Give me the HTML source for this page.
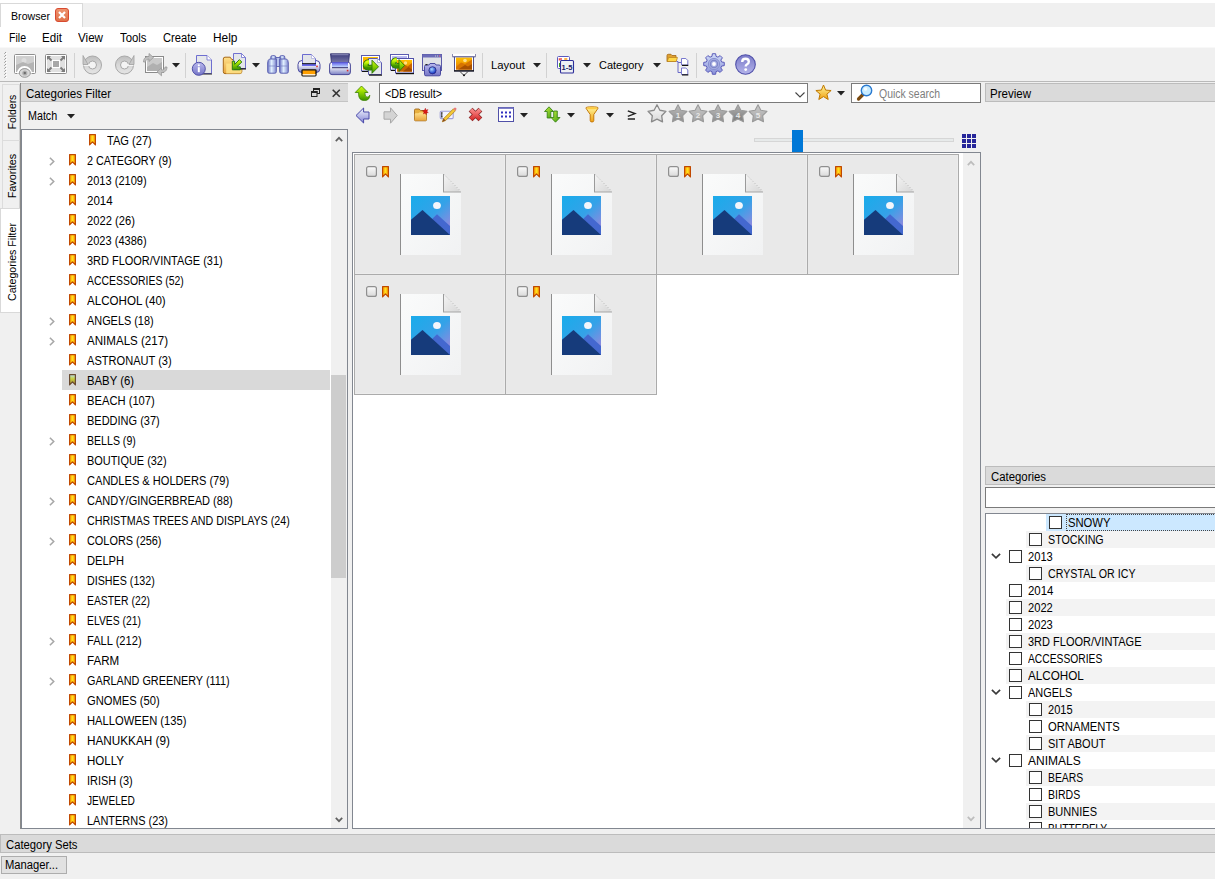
<!DOCTYPE html><html><head><meta charset="utf-8"><style>
html,body{margin:0;padding:0}
body{width:1215px;height:879px;position:relative;overflow:hidden;background:#f0f0f0;font-family:"Liberation Sans",sans-serif;color:#000}
div{position:absolute;box-sizing:border-box}
.t{white-space:nowrap;line-height:1;transform-origin:0 0}
svg{position:absolute;overflow:visible}
</style></head><body>
<div style="left:0px;top:0px;width:1215px;height:3px;background:#fff"></div>
<div style="left:0px;top:3px;width:83px;height:24px;background:#fff;border:1px solid #d9d9d9;border-bottom:none"></div>
<div class="t" style="left:11px;top:11px;font-size:11.5px;transform:scaleX(0.9244);">Browser</div>
<svg style="left:55px;top:8px" width="14" height="14" viewBox="0 0 14 14"><defs><linearGradient id="cg" x1="0" y1="0" x2="0" y2="1"><stop offset="0" stop-color="#ee9470"/><stop offset="1" stop-color="#e07048"/></linearGradient></defs><rect x="0.5" y="0.5" width="13" height="13" rx="2.5" fill="url(#cg)" stroke="#d84a30"/><path d="M4 4L10 10M10 4L4 10" stroke="#fff" stroke-width="2.2"/></svg>
<div style="left:0px;top:27px;width:1215px;height:21px;background:#fff"></div>
<div style="left:0px;top:47px;width:1215px;height:1px;background:#f8f8f8"></div>
<div class="t" style="left:9px;top:32px;font-size:12px;transform:scaleX(0.8788);">File</div>
<div class="t" style="left:42px;top:32px;font-size:12px;transform:scaleX(0.9668);">Edit</div>
<div class="t" style="left:78px;top:32px;font-size:12px;transform:scaleX(0.9691);">View</div>
<div class="t" style="left:119.5px;top:32px;font-size:12px;transform:scaleX(0.9459);">Tools</div>
<div class="t" style="left:162.5px;top:32px;font-size:12px;transform:scaleX(0.9297);">Create</div>
<div class="t" style="left:212.5px;top:32px;font-size:12px;transform:scaleX(0.9924);">Help</div>
<div style="left:0px;top:81px;width:1215px;height:1px;background:#b9b9b9"></div>
<div style="left:5px;top:52px;width:1px;height:1px;background:#9a9a9a"></div>
<div style="left:4px;top:53px;width:1px;height:1px;background:#b4b4b4"></div>
<div style="left:6px;top:53px;width:1px;height:1px;background:#fff"></div>
<div style="left:5px;top:55px;width:1px;height:1px;background:#9a9a9a"></div>
<div style="left:4px;top:56px;width:1px;height:1px;background:#b4b4b4"></div>
<div style="left:6px;top:56px;width:1px;height:1px;background:#fff"></div>
<div style="left:5px;top:58px;width:1px;height:1px;background:#9a9a9a"></div>
<div style="left:4px;top:59px;width:1px;height:1px;background:#b4b4b4"></div>
<div style="left:6px;top:59px;width:1px;height:1px;background:#fff"></div>
<div style="left:5px;top:61px;width:1px;height:1px;background:#9a9a9a"></div>
<div style="left:4px;top:62px;width:1px;height:1px;background:#b4b4b4"></div>
<div style="left:6px;top:62px;width:1px;height:1px;background:#fff"></div>
<div style="left:5px;top:64px;width:1px;height:1px;background:#9a9a9a"></div>
<div style="left:4px;top:65px;width:1px;height:1px;background:#b4b4b4"></div>
<div style="left:6px;top:65px;width:1px;height:1px;background:#fff"></div>
<div style="left:5px;top:67px;width:1px;height:1px;background:#9a9a9a"></div>
<div style="left:4px;top:68px;width:1px;height:1px;background:#b4b4b4"></div>
<div style="left:6px;top:68px;width:1px;height:1px;background:#fff"></div>
<div style="left:5px;top:70px;width:1px;height:1px;background:#9a9a9a"></div>
<div style="left:4px;top:71px;width:1px;height:1px;background:#b4b4b4"></div>
<div style="left:6px;top:71px;width:1px;height:1px;background:#fff"></div>
<div style="left:5px;top:73px;width:1px;height:1px;background:#9a9a9a"></div>
<div style="left:4px;top:74px;width:1px;height:1px;background:#b4b4b4"></div>
<div style="left:6px;top:74px;width:1px;height:1px;background:#fff"></div>
<div style="left:5px;top:76px;width:1px;height:1px;background:#9a9a9a"></div>
<div style="left:4px;top:77px;width:1px;height:1px;background:#b4b4b4"></div>
<div style="left:6px;top:77px;width:1px;height:1px;background:#fff"></div>
<div style="left:74px;top:53px;width:1px;height:25px;background:#d2d2d2"></div>
<div style="left:185px;top:53px;width:1px;height:25px;background:#d2d2d2"></div>
<div style="left:482px;top:53px;width:1px;height:25px;background:#d2d2d2"></div>
<div style="left:546px;top:53px;width:1px;height:25px;background:#d2d2d2"></div>
<div style="left:696px;top:53px;width:1px;height:25px;background:#d2d2d2"></div>
<div class="t" style="left:491px;top:60px;font-size:11.5px;transform:scaleX(0.9846);">Layout</div>
<div class="t" style="left:599px;top:60px;font-size:11.5px;transform:scaleX(0.9535);">Category</div>
<svg style="left:172px;top:63px" width="8" height="5" viewBox="0 0 8 5"><path d="M0 0H8L4 4.5Z" fill="#222"/></svg>
<svg style="left:252px;top:63px" width="8" height="5" viewBox="0 0 8 5"><path d="M0 0H8L4 4.5Z" fill="#222"/></svg>
<svg style="left:533px;top:63px" width="8" height="5" viewBox="0 0 8 5"><path d="M0 0H8L4 4.5Z" fill="#222"/></svg>
<svg style="left:583px;top:63px" width="8" height="5" viewBox="0 0 8 5"><path d="M0 0H8L4 4.5Z" fill="#222"/></svg>
<svg style="left:653px;top:63px" width="8" height="5" viewBox="0 0 8 5"><path d="M0 0H8L4 4.5Z" fill="#222"/></svg>
<svg style="left:0;top:0" width="0" height="0"><defs>
<linearGradient id="gray1" x1="0" y1="0" x2="0" y2="1"><stop offset="0" stop-color="#d4d4d4"/><stop offset="1" stop-color="#a8a8a8"/></linearGradient>
<linearGradient id="ring" x1="0" y1="0" x2="0" y2="1"><stop offset="0" stop-color="#bdbdbd"/><stop offset="0.5" stop-color="#d8d8d8"/><stop offset="1" stop-color="#e4e4e4"/></linearGradient>
<linearGradient id="purp" x1="0" y1="0" x2="0" y2="1"><stop offset="0" stop-color="#b9b9ee"/><stop offset="1" stop-color="#7474c6"/></linearGradient>
<linearGradient id="purp2" x1="0" y1="0" x2="0" y2="1"><stop offset="0" stop-color="#7a7ac8"/><stop offset="1" stop-color="#b4b4ea"/></linearGradient>
<linearGradient id="fold" x1="0" y1="0" x2="0" y2="1"><stop offset="0" stop-color="#ffe08a"/><stop offset="1" stop-color="#e8a640"/></linearGradient>
<linearGradient id="grn" x1="0" y1="0" x2="1" y2="1"><stop offset="0" stop-color="#c8f040"/><stop offset="1" stop-color="#3c9c10"/></linearGradient><linearGradient id="grn2" x1="0" y1="0" x2="0" y2="1"><stop offset="0" stop-color="#d8ff10"/><stop offset="0.5" stop-color="#88d000"/><stop offset="1" stop-color="#3a9000"/></linearGradient><linearGradient id="bk" x1="0" y1="0" x2="0" y2="1"><stop offset="0" stop-color="#f4f8ff"/><stop offset="1" stop-color="#8484d4"/></linearGradient>
<linearGradient id="binoc" x1="0" y1="0" x2="1" y2="0"><stop offset="0" stop-color="#8088d8"/><stop offset="0.5" stop-color="#d8e4f8"/><stop offset="1" stop-color="#8088d8"/></linearGradient>
<linearGradient id="prb" x1="0" y1="0" x2="0" y2="1"><stop offset="0" stop-color="#ffffff"/><stop offset="0.4" stop-color="#f0f0f6"/><stop offset="1" stop-color="#7a80c4"/></linearGradient>
<linearGradient id="lid" x1="0" y1="0" x2="0" y2="1"><stop offset="0" stop-color="#3a3a7c"/><stop offset="1" stop-color="#7a7aa8"/></linearGradient>
<linearGradient id="glass" x1="0" y1="0" x2="0" y2="1"><stop offset="0" stop-color="#5a5ae8"/><stop offset="1" stop-color="#c8e0ff"/></linearGradient>
<linearGradient id="orng" x1="0" y1="0" x2="0" y2="1"><stop offset="0" stop-color="#ffc000"/><stop offset="1" stop-color="#e07800"/></linearGradient>
<linearGradient id="gear" x1="0" y1="0" x2="0" y2="1"><stop offset="0" stop-color="#d0dcf8"/><stop offset="1" stop-color="#8890d8"/></linearGradient>
<linearGradient id="gold" x1="0" y1="0" x2="0" y2="1"><stop offset="0" stop-color="#fff8a0"/><stop offset="1" stop-color="#f0a010"/></linearGradient>
<linearGradient id="starg" x1="0" y1="0" x2="0" y2="1"><stop offset="0" stop-color="#bcbcbc"/><stop offset="1" stop-color="#8e8e8e"/></linearGradient><linearGradient id="starg2" x1="0" y1="0" x2="0" y2="1"><stop offset="0" stop-color="#cacaca"/><stop offset="1" stop-color="#a4a4a4"/></linearGradient><linearGradient id="starg3" x1="0" y1="0" x2="0" y2="1"><stop offset="0" stop-color="#b0b0b0"/><stop offset="1" stop-color="#7c7c7c"/></linearGradient><linearGradient id="star0" x1="0" y1="0" x2="0" y2="1"><stop offset="0" stop-color="#fafafa"/><stop offset="1" stop-color="#d8d8d8"/></linearGradient>
<radialGradient id="lens" cx="0.4" cy="0.35" r="0.6"><stop offset="0" stop-color="#a8d8ff"/><stop offset="1" stop-color="#1838c8"/></radialGradient>
</defs></svg>
<svg style="left:14px;top:54px" width="23" height="24" viewBox="0 0 23 24"><rect x="0.5" y="0.5" width="21" height="19" rx="1" fill="#fff" stroke="#8e8e8e"/><rect x="2" y="2" width="18" height="16" fill="#cfcfcf"/><circle cx="10" cy="6.5" r="2.5" fill="#dedede"/><path d="M2 11L9 8L14 10L20 8V18H2Z" fill="#b4b4b4"/><path d="M4 19.5A6.5 6.5 0 0 1 17 19.5" fill="none" stroke="#fff" stroke-width="2"/><ellipse cx="10.8" cy="19" rx="5.5" ry="4.3" fill="#d8d8d8" stroke="#9a9a9a"/><circle cx="10.8" cy="19" r="2.6" fill="#b0b0b0"/><circle cx="10.8" cy="19" r="1.2" fill="#6e6e6e"/></svg>
<svg style="left:45px;top:54px" width="22" height="20" viewBox="0 0 22 20"><rect x="0.5" y="0.5" width="21" height="19" rx="1" fill="#fff" stroke="#8a8a8a"/><rect x="2" y="2" width="18" height="16" fill="#e0e0e0"/><rect x="7" y="6" width="8" height="8" fill="#fff"/><rect x="8" y="7" width="6" height="6" fill="#a8a8a8"/><path d="M2.5 2.5L6.5 6.5M19.5 2.5L15.5 6.5M2.5 17.5L6.5 13.5M19.5 17.5L15.5 13.5" stroke="#7c7c7c" stroke-width="2"/><path d="M2 2H6L2 6ZM20 2H16L20 6ZM2 18H6L2 14ZM20 18H16L20 14Z" fill="#7c7c7c"/></svg>
<svg style="left:82px;top:55px" width="21" height="20" viewBox="0 0 21 20"><circle cx="10.5" cy="10" r="9" fill="url(#ring)" stroke="#a8a8a8"/><circle cx="10.5" cy="10" r="4" fill="#f4f4f4" stroke="#a8a8a8"/><path d="M1.5 10H9" stroke="#f4f4f4" stroke-width="2"/><path d="M1 0.5V9.5H6Z" fill="#c8c8c8" stroke="#a0a0a0" stroke-width="0.8"/></svg>
<svg style="left:114px;top:55px" width="21" height="20" viewBox="0 0 21 20"><circle cx="10.5" cy="10" r="9" fill="url(#ring)" stroke="#a8a8a8"/><circle cx="10.5" cy="10" r="4" fill="#f4f4f4" stroke="#a8a8a8"/><path d="M12 10H19.5" stroke="#f4f4f4" stroke-width="2"/><path d="M20 0.5V9.5H15Z" fill="#c8c8c8" stroke="#a0a0a0" stroke-width="0.8"/></svg>
<svg style="left:143px;top:53px" width="25" height="24" viewBox="0 0 25 24"><rect x="2.5" y="3.5" width="18" height="16" fill="#fff" stroke="#8a8a8a"/><rect x="4" y="5" width="15" height="13" fill="#cacaca"/><path d="M4 14L10 10L14 12L19 9V18H4Z" fill="#b0b0b0"/><path d="M0.5 9C0.5 5 3 3.5 6 3.5V0.5L10.5 4.5L6 8.5V6C4 6 2.5 7 2.5 9Z" fill="#c0c0c0" stroke="#9a9a9a" stroke-width="0.8"/><path d="M24 14C24 18 21.5 19.5 18.5 19.5V22.8L14 18.8L18.5 14.8V17C20.5 17 22 16 22 14Z" fill="#c0c0c0" stroke="#9a9a9a" stroke-width="0.8"/></svg>
<svg style="left:191px;top:54px" width="22" height="23" viewBox="0 0 22 23"><path d="M5.5 1.5H16L20.5 6V19.5H5.5Z" fill="#e6e8ea" stroke="#6e6ed0"/><path d="M16 1.5V6H20.5" fill="#fff" stroke="#6e6ed0" stroke-width="0.8"/><rect x="7" y="19.5" width="14" height="1" fill="#222"/><circle cx="7.8" cy="14.8" r="6.5" fill="url(#purp)" stroke="#5050a8"/><rect x="6.8" y="13.2" width="2" height="5" fill="#fff"/><circle cx="7.8" cy="11.3" r="1.1" fill="#fff"/></svg>
<svg style="left:222px;top:52px" width="25" height="23" viewBox="0 0 25 23"><path d="M1.3 7Q1.3 5.2 3 5.2H8.2L9.8 7.5H18.2Q19.8 7.5 19.8 9V19.8Q19.8 21.6 18 21.6H3Q1.3 21.6 1.3 19.8Z" fill="url(#fold)" stroke="#a86a18" stroke-width="1"/><path d="M4.2 11.5H19.6V20.5Q19.6 21.4 18.6 21.4H4.2Z" fill="#ffe48a" opacity="0.85"/><path d="M11.5 1.5H19.5L23.5 5.5V16.5H11.5Z" fill="#e4e6ea" stroke="#7070d0"/><path d="M19.5 1.5V5.5H23.5Z" fill="#fff" stroke="#7070d0" stroke-width="0.8"/><rect x="12" y="16.3" width="12" height="1.2" fill="#111"/><path d="M10.3 17.8H18.3V14.8H15L19.8 10L17.4 7.6L12.6 12.4V9.2H10.3Z" fill="url(#grn2)" stroke="#1c7010" stroke-width="0.9" stroke-linejoin="round"/></svg>
<svg style="left:267px;top:55px" width="22" height="19" viewBox="0 0 22 19"><defs><linearGradient id="barl" x1="0" y1="0" x2="1" y2="0"><stop offset="0" stop-color="#7078c8"/><stop offset="0.45" stop-color="#e0f0ff"/><stop offset="1" stop-color="#8088d0"/></linearGradient></defs><rect x="3.8" y="0.6" width="5" height="4.5" rx="1.5" fill="url(#barl)" stroke="#5a60b0" stroke-width="0.9"/><rect x="12.8" y="0.6" width="5" height="4.5" rx="1.5" fill="url(#barl)" stroke="#5a60b0" stroke-width="0.9"/><rect x="9" y="2.5" width="4" height="9" fill="#b8c4ee" stroke="#5a60b0" stroke-width="0.9"/><path d="M2.5 4H9.3V16.8Q9.3 18.2 7.8 18.2H2.2Q0.7 18.2 0.7 16.8V8Q0.7 5 2.5 4Z" fill="url(#barl)" stroke="#5a60b0" stroke-width="1"/><path d="M19.5 4H12.7V16.8Q12.7 18.2 14.2 18.2H19.8Q21.3 18.2 21.3 16.8V8Q21.3 5 19.5 4Z" fill="url(#barl)" stroke="#5a60b0" stroke-width="1"/><rect x="1.5" y="10.5" width="7" height="1" fill="#7078c0" opacity="0.6"/><rect x="13.5" y="10.5" width="7" height="1" fill="#7078c0" opacity="0.6"/></svg>
<svg style="left:297px;top:53px" width="24" height="24" viewBox="0 0 24 24"><path d="M1 11.5Q1 7.5 5 7.5H19Q23 7.5 23 11.5V15.5Q23 19.5 19 19.5H5Q1 19.5 1 15.5Z" fill="url(#prb)" stroke="#4a4aa0" stroke-width="1"/><path d="M5.5 1.5H14.5L18.5 5.5V11H5.5Z" fill="#e2e4e8" stroke="#6a6ad0" stroke-width="1"/><path d="M14.5 1.5V5.5H18.5Z" fill="#fff" stroke="#9a9ad8" stroke-width="0.6"/><rect x="5" y="10.2" width="14" height="1.2" fill="#111"/><rect x="5" y="11.4" width="14" height="1.4" fill="#4848e8"/><rect x="19.2" y="12.6" width="1.6" height="1.6" fill="#d83030"/><rect x="5" y="16.8" width="14" height="6" rx="0.8" fill="#ffa000" stroke="#111" stroke-width="1.3"/><rect x="5.6" y="21.2" width="12.8" height="1.2" fill="#fff"/></svg>
<svg style="left:329px;top:53px" width="22" height="23" viewBox="0 0 22 23"><path d="M1.5 0.8H20.5L19.5 10H2.5Z" fill="url(#lid)" stroke="#2c2c6c" stroke-width="0.8"/><rect x="2.5" y="1.2" width="17" height="1" fill="#8a8ab8"/><path d="M0.6 12Q0.6 9.5 2.5 9.5H19.5Q21.4 9.5 21.4 12V19Q21.4 21.6 19 21.6H3Q0.6 21.6 0.6 19Z" fill="url(#prb)" stroke="#4a4a98" stroke-width="1"/><rect x="3" y="9.3" width="16" height="5" fill="url(#glass)"/><rect x="3" y="14.2" width="16" height="1" fill="#2a2a6a"/><rect x="17.8" y="16.8" width="1.6" height="1.6" fill="#d83030"/></svg>
<svg style="left:360px;top:54px" width="23" height="22" viewBox="0 0 23 22"><rect x="1.5" y="1.5" width="18" height="15.5" fill="#fff" stroke="#5a5ab0"/><rect x="3" y="3" width="15" height="12.5" fill="url(#orng)"/><rect x="2" y="17" width="7" height="1" fill="#111"/><path d="M8.5 4.5H17.5L21.5 8.5V20.5H8.5Z" fill="#e6e8ea" stroke="#5a5ab0"/><path d="M17.5 4.5V8.5H21.5Z" fill="#fff" stroke="#8a8ad0" stroke-width="0.6"/><rect x="9" y="20.5" width="13" height="1.2" fill="#111"/><path d="M9 8Q5.3 8.3 5.6 11.6Q6 14.8 12.5 13.3" fill="none" stroke="#2e7a08" stroke-width="5.6"/><path d="M9 8Q5.3 8.3 5.6 11.6Q6 14.8 12.5 13.3" fill="none" stroke="url(#grn2)" stroke-width="3.8"/><path d="M12 6.2L18.5 12.8L12 19.3Z" fill="url(#grn2)" stroke="#2e7a08" stroke-width="0.9" stroke-linejoin="round"/></svg>
<svg style="left:389px;top:53px" width="26" height="22" viewBox="0 0 26 22"><defs><linearGradient id="lpurp" x1="0" y1="0" x2="0" y2="1"><stop offset="0" stop-color="#c0c0f4"/><stop offset="1" stop-color="#7474d4"/></linearGradient></defs><rect x="1.5" y="1.5" width="18" height="15.5" fill="#fff" stroke="#5a5ab0"/><rect x="3" y="3" width="15" height="12.5" fill="url(#lpurp)"/><rect x="2" y="17" width="5" height="1" fill="#111"/><rect x="6.5" y="5.5" width="18" height="14.5" fill="#fff" stroke="#5050a8"/><rect x="8" y="7" width="15" height="11.5" fill="url(#orng)"/><rect x="7" y="20" width="18" height="1.2" fill="#111"/><path d="M8 18.5L15 11L18.5 13.5L23 10V18.5Z" fill="#c86400"/><path d="M14 18.5L19.5 14L23 16.5V18.5Z" fill="#a04800"/><circle cx="16.5" cy="10" r="1.7" fill="#ffe080"/><path d="M7.8 7Q4 7.3 4.3 10.6Q4.6 13.8 10.5 12.6" fill="none" stroke="#2e7a08" stroke-width="5.6"/><path d="M7.8 7Q4 7.3 4.3 10.6Q4.6 13.8 10.5 12.6" fill="none" stroke="url(#grn2)" stroke-width="3.8"/><path d="M10 6.5L15.5 12.5L10 18.5Z" fill="url(#grn2)" stroke="#2e7a08" stroke-width="0.9" stroke-linejoin="round"/></svg>
<svg style="left:421px;top:53px" width="22" height="24" viewBox="0 0 22 24"><rect x="1.5" y="1.5" width="19" height="16" fill="#e0e2e6" stroke="#5a5aa8"/><rect x="1.5" y="1.5" width="19" height="3" fill="#6c6cb8"/><rect x="14" y="2.5" width="1" height="1" fill="#ccc"/><rect x="16" y="2.5" width="1" height="1" fill="#ccc"/><rect x="18" y="2.5" width="1.2" height="1" fill="#f06080"/><path d="M3.5 13.5Q3.5 12 5 12H8L9 10.5H14L15 12H18Q19.5 12 19.5 13.5V21.5Q19.5 22.8 18 22.8H5Q3.5 22.8 3.5 21.5Z" fill="url(#purp)" stroke="#4a4aa0"/><rect x="4.5" y="11" width="2" height="1.2" fill="#222"/><circle cx="11.5" cy="17.3" r="3.6" fill="url(#lens)" stroke="#2a2a80" stroke-width="0.8"/></svg>
<svg style="left:452px;top:53px" width="24" height="24" viewBox="0 0 24 24"><rect x="2.5" y="3.5" width="19" height="14.5" fill="#fff" stroke="#50508a"/><rect x="4" y="4.5" width="16" height="12" fill="url(#orng)"/><path d="M4 14L9 9.5L13 11L20 6.5V16.5H4Z" fill="#d87400"/><path d="M6 16.5L13 12L16 13.5L20 11V16.5Z" fill="#a85000"/><circle cx="13" cy="7.5" r="1.8" fill="#ffe088"/><rect x="2" y="17.2" width="20" height="1.3" fill="#111"/><rect x="0.5" y="0.8" width="23" height="3" fill="#fff"/><rect x="0.5" y="3.3" width="23" height="1" fill="#50508a"/><rect x="0" y="1" width="1" height="3" fill="#8a8ab0"/><rect x="23" y="1" width="1" height="3" fill="#8a8ab0"/><path d="M8 18.5L12 22.5L16 18.5" fill="none" stroke="#333" stroke-width="0.9"/><circle cx="12" cy="22.3" r="1" fill="#111"/></svg>
<svg style="left:556px;top:56px" width="19" height="18" viewBox="0 0 19 18"><rect x="1.5" y="0.5" width="12" height="12" rx="1" fill="#fff" stroke="#5a5ac0"/><path d="M3.5 4.5V3H6" stroke="#e85050" stroke-width="1.6" fill="none"/><rect x="8" y="2.2" width="3.5" height="1.6" rx="0.8" fill="#ff9a10"/><rect x="3" y="7" width="1.4" height="4" fill="#40a020"/><rect x="4.5" y="4.5" width="13" height="12.5" rx="1" fill="#eef0f4" stroke="#2e2e9a" stroke-width="1.1"/><text x="11" y="14.2" font-family="Liberation Sans" font-weight="bold" font-size="7.5" text-anchor="middle" fill="#1a1a60">1-5</text></svg>
<svg style="left:666px;top:53px" width="24" height="23" viewBox="0 0 24 23"><path d="M1 8.5V2.5Q1 1.3 2.2 1.3H5L6 2.5H10V8.5Z" fill="#e0a030" stroke="#a87020" stroke-width="0.9"/><path d="M1.2 8.5L2.6 4.5H11.5L10.2 8.5Z" fill="#ffd84a" stroke="#b88020" stroke-width="0.7"/><path d="M10.5 8.5H12V19.5H15M12 9.5H15" fill="none" stroke="#6a6ac8" stroke-width="1"/><path d="M15.5 5.5H19.8L21.8 7.5V12H15.5Z" fill="#fff" stroke="#6a6ac8" stroke-width="0.9"/><rect x="16" y="11.8" width="6.3" height="1.2" fill="#111"/><path d="M15.5 15H19.8L21.8 17V21.5H15.5Z" fill="#fff" stroke="#6a6ac8" stroke-width="0.9"/><rect x="16" y="21.3" width="6.3" height="1.2" fill="#111"/></svg>
<svg style="left:703px;top:53px" width="22" height="22" viewBox="0 0 22 22"><polygon points="18.63,8.96 21.27,9.37 21.27,12.63 18.63,13.04 17.84,14.95 19.41,17.11 17.11,19.41 14.95,17.84 13.04,18.63 12.63,21.27 9.37,21.27 8.96,18.63 7.05,17.84 4.89,19.41 2.59,17.11 4.16,14.95 3.37,13.04 0.73,12.63 0.73,9.37 3.37,8.96 4.16,7.05 2.59,4.89 4.89,2.59 7.05,4.16 8.96,3.37 9.37,0.73 12.63,0.73 13.04,3.37 14.95,4.16 17.11,2.59 19.41,4.89 17.84,7.05" fill="url(#gear)" stroke="#5a5ab8" stroke-width="1" stroke-linejoin="round"/><circle cx="11" cy="11" r="5.6" fill="#a8b0e4" stroke="#8890d0" stroke-width="1"/><circle cx="11" cy="11" r="3.6" fill="none" stroke="#8088c8" stroke-width="1.3"/><circle cx="11" cy="11" r="1.9" fill="#fff"/></svg>
<svg style="left:735px;top:54px" width="21" height="21" viewBox="0 0 21 21"><circle cx="10.5" cy="10.5" r="9.8" fill="url(#purp2)" stroke="#5252aa" stroke-width="1.1"/><path d="M7.2 8Q7.2 4.8 10.5 4.8Q13.8 4.8 13.8 7.8Q13.8 9.5 11.8 10.5Q10.7 11.1 10.7 12.6" fill="none" stroke="#fff" stroke-width="2.4"/><circle cx="10.7" cy="15.6" r="1.4" fill="#fff"/></svg>
<div style="left:2px;top:84px;width:18px;height:56px;background:#f0f0f0;border:1px solid #dcdcdc;border-right:1px solid #d0d0d0;border-bottom:none"></div>
<div style="left:2px;top:140px;width:18px;height:68px;background:#f0f0f0;border:1px solid #dcdcdc;border-right:1px solid #d0d0d0;border-bottom:none"></div>
<div style="left:0px;top:208px;width:21px;height:105px;background:#fff;border:1px solid #d9d9d9;border-right:none"></div>
<div style="left:20px;top:83px;width:1px;height:746px;background:#8a8a8a"></div>
<div class="t" style="left:11.5px;top:112px;font-size:11px;transform:translate(-50%,-50%) rotate(-90deg) scaleX(0.9431);transform-origin:50% 50%;">Folders</div>
<div class="t" style="left:11.5px;top:176px;font-size:11px;transform:translate(-50%,-50%) rotate(-90deg) scaleX(0.9856);transform-origin:50% 50%;">Favorites</div>
<div class="t" style="left:11.5px;top:262px;font-size:11px;transform:translate(-50%,-50%) rotate(-90deg) scaleX(0.9665);transform-origin:50% 50%;">Categories Filter</div>
<div style="left:21px;top:83px;width:327px;height:19px;background:#dadada;border-top:1px solid #c4c4c4;border-bottom:1px solid #c4c4c4"></div>
<div class="t" style="left:26px;top:88px;font-size:12px;transform:scaleX(0.9656);">Categories Filter</div>
<div class="t" style="left:28px;top:110px;font-size:12px;transform:scaleX(0.8933);">Match</div>
<svg style="left:67px;top:114px" width="8" height="5" viewBox="0 0 8 5"><path d="M0 0H8L4 4.5Z" fill="#222"/></svg>
<svg style="left:311px;top:88px" width="9" height="9" viewBox="0 0 9 9"><rect x="2.5" y="0.5" width="6" height="5" fill="none" stroke="#222"/><rect x="2" y="0" width="7" height="2" fill="#222"/><rect x="0.5" y="3.5" width="5.5" height="5" fill="#dadada" stroke="#222"/><rect x="0" y="3" width="6.5" height="2" fill="#222"/></svg>
<svg style="left:332px;top:89px" width="9" height="9" viewBox="0 0 9 9"><path d="M0.7 0.7L7.8 7.8M7.8 0.7L0.7 7.8" stroke="#333" stroke-width="1.6"/></svg>
<div style="left:21px;top:129px;width:327px;height:700px;background:#fff;border:1px solid #828790"></div>
<div style="left:331px;top:130px;width:16px;height:698px;background:#f0f0f0"></div>
<div style="left:331px;top:375px;width:15px;height:203px;background:#cdcdcd"></div>
<svg style="left:335px;top:136px" width="8" height="6" viewBox="0 0 8 6"><path d="M0.8 5.2L4 1.8L7.2 5.2" fill="none" stroke="#606060" stroke-width="1.7"/></svg>
<svg style="left:335px;top:817px" width="8" height="6" viewBox="0 0 8 6"><path d="M0.8 0.8L4 4.2L7.2 0.8" fill="none" stroke="#606060" stroke-width="1.7"/></svg>
<svg style="left:0;top:0" width="0" height="0"><defs><linearGradient id="bg1" x1="0" y1="0" x2="1" y2="0"><stop offset="0" stop-color="#ff9a00"/><stop offset="0.5" stop-color="#ffe020"/><stop offset="1" stop-color="#ff9a00"/></linearGradient><linearGradient id="bg2" x1="0" y1="0" x2="0" y2="1"><stop offset="0" stop-color="#b8e0f0"/><stop offset="0.4" stop-color="#c8d040"/><stop offset="1" stop-color="#a08030"/></linearGradient></defs></svg>
<div style="left:22px;top:130px;width:309px;height:698px;overflow:hidden">
<svg style="left:67px;top:4px" width="7" height="12" viewBox="0 0 7 12"><path d="M0.6 0.6H6.4V10.9L3.5 7.9L0.6 10.9Z" fill="url(#bg1)" stroke="#c04800" stroke-width="1.2" stroke-linejoin="round"/></svg>
<div class="t" style="left:85px;top:5px;font-size:12px;transform:scaleX(0.9246);">TAG (27)</div>
<svg style="left:27px;top:26.5px" width="6" height="9" viewBox="0 0 6 9"><path d="M0.9 0.8L4.7 4.5L0.9 8.2" fill="none" stroke="#a8a8a8" stroke-width="1.6"/></svg>
<svg style="left:47px;top:24px" width="7" height="12" viewBox="0 0 7 12"><path d="M0.6 0.6H6.4V10.9L3.5 7.9L0.6 10.9Z" fill="url(#bg1)" stroke="#c04800" stroke-width="1.2" stroke-linejoin="round"/></svg>
<div class="t" style="left:65px;top:25px;font-size:12px;transform:scaleX(0.9008);">2 CATEGORY (9)</div>
<svg style="left:27px;top:46.5px" width="6" height="9" viewBox="0 0 6 9"><path d="M0.9 0.8L4.7 4.5L0.9 8.2" fill="none" stroke="#a8a8a8" stroke-width="1.6"/></svg>
<svg style="left:47px;top:44px" width="7" height="12" viewBox="0 0 7 12"><path d="M0.6 0.6H6.4V10.9L3.5 7.9L0.6 10.9Z" fill="url(#bg1)" stroke="#c04800" stroke-width="1.2" stroke-linejoin="round"/></svg>
<div class="t" style="left:65px;top:45px;font-size:12px;transform:scaleX(0.9225);">2013 (2109)</div>
<svg style="left:47px;top:64px" width="7" height="12" viewBox="0 0 7 12"><path d="M0.6 0.6H6.4V10.9L3.5 7.9L0.6 10.9Z" fill="url(#bg1)" stroke="#c04800" stroke-width="1.2" stroke-linejoin="round"/></svg>
<div class="t" style="left:65px;top:65px;font-size:12px;transform:scaleX(0.9587);">2014</div>
<svg style="left:47px;top:84px" width="7" height="12" viewBox="0 0 7 12"><path d="M0.6 0.6H6.4V10.9L3.5 7.9L0.6 10.9Z" fill="url(#bg1)" stroke="#c04800" stroke-width="1.2" stroke-linejoin="round"/></svg>
<div class="t" style="left:65px;top:85px;font-size:12px;transform:scaleX(0.9324);">2022 (26)</div>
<svg style="left:47px;top:104px" width="7" height="12" viewBox="0 0 7 12"><path d="M0.6 0.6H6.4V10.9L3.5 7.9L0.6 10.9Z" fill="url(#bg1)" stroke="#c04800" stroke-width="1.2" stroke-linejoin="round"/></svg>
<div class="t" style="left:65px;top:105px;font-size:12px;transform:scaleX(0.9225);">2023 (4386)</div>
<svg style="left:47px;top:124px" width="7" height="12" viewBox="0 0 7 12"><path d="M0.6 0.6H6.4V10.9L3.5 7.9L0.6 10.9Z" fill="url(#bg1)" stroke="#c04800" stroke-width="1.2" stroke-linejoin="round"/></svg>
<div class="t" style="left:65px;top:125px;font-size:12px;transform:scaleX(0.9139);">3RD FLOOR/VINTAGE (31)</div>
<svg style="left:47px;top:144px" width="7" height="12" viewBox="0 0 7 12"><path d="M0.6 0.6H6.4V10.9L3.5 7.9L0.6 10.9Z" fill="url(#bg1)" stroke="#c04800" stroke-width="1.2" stroke-linejoin="round"/></svg>
<div class="t" style="left:65px;top:145px;font-size:12px;transform:scaleX(0.8691);">ACCESSORIES (52)</div>
<svg style="left:47px;top:164px" width="7" height="12" viewBox="0 0 7 12"><path d="M0.6 0.6H6.4V10.9L3.5 7.9L0.6 10.9Z" fill="url(#bg1)" stroke="#c04800" stroke-width="1.2" stroke-linejoin="round"/></svg>
<div class="t" style="left:65px;top:165px;font-size:12px;transform:scaleX(0.9645);">ALCOHOL (40)</div>
<svg style="left:27px;top:186.5px" width="6" height="9" viewBox="0 0 6 9"><path d="M0.9 0.8L4.7 4.5L0.9 8.2" fill="none" stroke="#a8a8a8" stroke-width="1.6"/></svg>
<svg style="left:47px;top:184px" width="7" height="12" viewBox="0 0 7 12"><path d="M0.6 0.6H6.4V10.9L3.5 7.9L0.6 10.9Z" fill="url(#bg1)" stroke="#c04800" stroke-width="1.2" stroke-linejoin="round"/></svg>
<div class="t" style="left:65px;top:185px;font-size:12px;transform:scaleX(0.9079);">ANGELS (18)</div>
<svg style="left:27px;top:206.5px" width="6" height="9" viewBox="0 0 6 9"><path d="M0.9 0.8L4.7 4.5L0.9 8.2" fill="none" stroke="#a8a8a8" stroke-width="1.6"/></svg>
<svg style="left:47px;top:204px" width="7" height="12" viewBox="0 0 7 12"><path d="M0.6 0.6H6.4V10.9L3.5 7.9L0.6 10.9Z" fill="url(#bg1)" stroke="#c04800" stroke-width="1.2" stroke-linejoin="round"/></svg>
<div class="t" style="left:65px;top:205px;font-size:12px;transform:scaleX(0.9639);">ANIMALS (217)</div>
<svg style="left:47px;top:224px" width="7" height="12" viewBox="0 0 7 12"><path d="M0.6 0.6H6.4V10.9L3.5 7.9L0.6 10.9Z" fill="url(#bg1)" stroke="#c04800" stroke-width="1.2" stroke-linejoin="round"/></svg>
<div class="t" style="left:65px;top:225px;font-size:12px;transform:scaleX(0.9227);">ASTRONAUT (3)</div>
<div style="left:40px;top:240px;width:268px;height:20px;background:#d9d9d9"></div>
<svg style="left:47px;top:244px" width="7" height="12" viewBox="0 0 7 12"><path d="M0.6 0.6H6.4V10.9L3.5 7.9L0.6 10.9Z" fill="url(#bg2)" stroke="#6a4a30" stroke-width="1.2" stroke-linejoin="round"/></svg>
<div class="t" style="left:65px;top:245px;font-size:12px;transform:scaleX(0.9435);">BABY (6)</div>
<svg style="left:47px;top:264px" width="7" height="12" viewBox="0 0 7 12"><path d="M0.6 0.6H6.4V10.9L3.5 7.9L0.6 10.9Z" fill="url(#bg1)" stroke="#c04800" stroke-width="1.2" stroke-linejoin="round"/></svg>
<div class="t" style="left:65px;top:265px;font-size:12px;transform:scaleX(0.9326);">BEACH (107)</div>
<svg style="left:47px;top:284px" width="7" height="12" viewBox="0 0 7 12"><path d="M0.6 0.6H6.4V10.9L3.5 7.9L0.6 10.9Z" fill="url(#bg1)" stroke="#c04800" stroke-width="1.2" stroke-linejoin="round"/></svg>
<div class="t" style="left:65px;top:285px;font-size:12px;transform:scaleX(0.9161);">BEDDING (37)</div>
<svg style="left:27px;top:306.5px" width="6" height="9" viewBox="0 0 6 9"><path d="M0.9 0.8L4.7 4.5L0.9 8.2" fill="none" stroke="#a8a8a8" stroke-width="1.6"/></svg>
<svg style="left:47px;top:304px" width="7" height="12" viewBox="0 0 7 12"><path d="M0.6 0.6H6.4V10.9L3.5 7.9L0.6 10.9Z" fill="url(#bg1)" stroke="#c04800" stroke-width="1.2" stroke-linejoin="round"/></svg>
<div class="t" style="left:65px;top:305px;font-size:12px;transform:scaleX(0.8815);">BELLS (9)</div>
<svg style="left:47px;top:324px" width="7" height="12" viewBox="0 0 7 12"><path d="M0.6 0.6H6.4V10.9L3.5 7.9L0.6 10.9Z" fill="url(#bg1)" stroke="#c04800" stroke-width="1.2" stroke-linejoin="round"/></svg>
<div class="t" style="left:65px;top:325px;font-size:12px;transform:scaleX(0.9112);">BOUTIQUE (32)</div>
<svg style="left:47px;top:344px" width="7" height="12" viewBox="0 0 7 12"><path d="M0.6 0.6H6.4V10.9L3.5 7.9L0.6 10.9Z" fill="url(#bg1)" stroke="#c04800" stroke-width="1.2" stroke-linejoin="round"/></svg>
<div class="t" style="left:65px;top:345px;font-size:12px;transform:scaleX(0.9224);">CANDLES &amp; HOLDERS (79)</div>
<svg style="left:27px;top:366.5px" width="6" height="9" viewBox="0 0 6 9"><path d="M0.9 0.8L4.7 4.5L0.9 8.2" fill="none" stroke="#a8a8a8" stroke-width="1.6"/></svg>
<svg style="left:47px;top:364px" width="7" height="12" viewBox="0 0 7 12"><path d="M0.6 0.6H6.4V10.9L3.5 7.9L0.6 10.9Z" fill="url(#bg1)" stroke="#c04800" stroke-width="1.2" stroke-linejoin="round"/></svg>
<div class="t" style="left:65px;top:365px;font-size:12px;transform:scaleX(0.9181);">CANDY/GINGERBREAD (88)</div>
<svg style="left:47px;top:384px" width="7" height="12" viewBox="0 0 7 12"><path d="M0.6 0.6H6.4V10.9L3.5 7.9L0.6 10.9Z" fill="url(#bg1)" stroke="#c04800" stroke-width="1.2" stroke-linejoin="round"/></svg>
<div class="t" style="left:65px;top:385px;font-size:12px;transform:scaleX(0.8905);">CHRISTMAS TREES AND DISPLAYS (24)</div>
<svg style="left:27px;top:406.5px" width="6" height="9" viewBox="0 0 6 9"><path d="M0.9 0.8L4.7 4.5L0.9 8.2" fill="none" stroke="#a8a8a8" stroke-width="1.6"/></svg>
<svg style="left:47px;top:404px" width="7" height="12" viewBox="0 0 7 12"><path d="M0.6 0.6H6.4V10.9L3.5 7.9L0.6 10.9Z" fill="url(#bg1)" stroke="#c04800" stroke-width="1.2" stroke-linejoin="round"/></svg>
<div class="t" style="left:65px;top:405px;font-size:12px;transform:scaleX(0.9082);">COLORS (256)</div>
<svg style="left:47px;top:424px" width="7" height="12" viewBox="0 0 7 12"><path d="M0.6 0.6H6.4V10.9L3.5 7.9L0.6 10.9Z" fill="url(#bg1)" stroke="#c04800" stroke-width="1.2" stroke-linejoin="round"/></svg>
<div class="t" style="left:65px;top:425px;font-size:12px;transform:scaleX(0.9246);">DELPH</div>
<svg style="left:47px;top:444px" width="7" height="12" viewBox="0 0 7 12"><path d="M0.6 0.6H6.4V10.9L3.5 7.9L0.6 10.9Z" fill="url(#bg1)" stroke="#c04800" stroke-width="1.2" stroke-linejoin="round"/></svg>
<div class="t" style="left:65px;top:445px;font-size:12px;transform:scaleX(0.8917);">DISHES (132)</div>
<svg style="left:47px;top:464px" width="7" height="12" viewBox="0 0 7 12"><path d="M0.6 0.6H6.4V10.9L3.5 7.9L0.6 10.9Z" fill="url(#bg1)" stroke="#c04800" stroke-width="1.2" stroke-linejoin="round"/></svg>
<div class="t" style="left:65px;top:465px;font-size:12px;transform:scaleX(0.8653);">EASTER (22)</div>
<svg style="left:47px;top:484px" width="7" height="12" viewBox="0 0 7 12"><path d="M0.6 0.6H6.4V10.9L3.5 7.9L0.6 10.9Z" fill="url(#bg1)" stroke="#c04800" stroke-width="1.2" stroke-linejoin="round"/></svg>
<div class="t" style="left:65px;top:485px;font-size:12px;transform:scaleX(0.8626);">ELVES (21)</div>
<svg style="left:27px;top:506.5px" width="6" height="9" viewBox="0 0 6 9"><path d="M0.9 0.8L4.7 4.5L0.9 8.2" fill="none" stroke="#a8a8a8" stroke-width="1.6"/></svg>
<svg style="left:47px;top:504px" width="7" height="12" viewBox="0 0 7 12"><path d="M0.6 0.6H6.4V10.9L3.5 7.9L0.6 10.9Z" fill="url(#bg1)" stroke="#c04800" stroke-width="1.2" stroke-linejoin="round"/></svg>
<div class="t" style="left:65px;top:505px;font-size:12px;transform:scaleX(0.9267);">FALL (212)</div>
<svg style="left:47px;top:524px" width="7" height="12" viewBox="0 0 7 12"><path d="M0.6 0.6H6.4V10.9L3.5 7.9L0.6 10.9Z" fill="url(#bg1)" stroke="#c04800" stroke-width="1.2" stroke-linejoin="round"/></svg>
<div class="t" style="left:65px;top:525px;font-size:12px;transform:scaleX(0.9657);">FARM</div>
<svg style="left:27px;top:546.5px" width="6" height="9" viewBox="0 0 6 9"><path d="M0.9 0.8L4.7 4.5L0.9 8.2" fill="none" stroke="#a8a8a8" stroke-width="1.6"/></svg>
<svg style="left:47px;top:544px" width="7" height="12" viewBox="0 0 7 12"><path d="M0.6 0.6H6.4V10.9L3.5 7.9L0.6 10.9Z" fill="url(#bg1)" stroke="#c04800" stroke-width="1.2" stroke-linejoin="round"/></svg>
<div class="t" style="left:65px;top:545px;font-size:12px;transform:scaleX(0.9035);">GARLAND GREENERY (111)</div>
<svg style="left:47px;top:564px" width="7" height="12" viewBox="0 0 7 12"><path d="M0.6 0.6H6.4V10.9L3.5 7.9L0.6 10.9Z" fill="url(#bg1)" stroke="#c04800" stroke-width="1.2" stroke-linejoin="round"/></svg>
<div class="t" style="left:65px;top:565px;font-size:12px;transform:scaleX(0.9319);">GNOMES (50)</div>
<svg style="left:47px;top:584px" width="7" height="12" viewBox="0 0 7 12"><path d="M0.6 0.6H6.4V10.9L3.5 7.9L0.6 10.9Z" fill="url(#bg1)" stroke="#c04800" stroke-width="1.2" stroke-linejoin="round"/></svg>
<div class="t" style="left:65px;top:585px;font-size:12px;transform:scaleX(0.9325);">HALLOWEEN (135)</div>
<svg style="left:47px;top:604px" width="7" height="12" viewBox="0 0 7 12"><path d="M0.6 0.6H6.4V10.9L3.5 7.9L0.6 10.9Z" fill="url(#bg1)" stroke="#c04800" stroke-width="1.2" stroke-linejoin="round"/></svg>
<div class="t" style="left:65px;top:605px;font-size:12px;transform:scaleX(0.9789);">HANUKKAH (9)</div>
<svg style="left:47px;top:624px" width="7" height="12" viewBox="0 0 7 12"><path d="M0.6 0.6H6.4V10.9L3.5 7.9L0.6 10.9Z" fill="url(#bg1)" stroke="#c04800" stroke-width="1.2" stroke-linejoin="round"/></svg>
<div class="t" style="left:65px;top:625px;font-size:12px;transform:scaleX(0.9618);">HOLLY</div>
<svg style="left:47px;top:644px" width="7" height="12" viewBox="0 0 7 12"><path d="M0.6 0.6H6.4V10.9L3.5 7.9L0.6 10.9Z" fill="url(#bg1)" stroke="#c04800" stroke-width="1.2" stroke-linejoin="round"/></svg>
<div class="t" style="left:65px;top:645px;font-size:12px;transform:scaleX(0.9137);">IRISH (3)</div>
<svg style="left:47px;top:664px" width="7" height="12" viewBox="0 0 7 12"><path d="M0.6 0.6H6.4V10.9L3.5 7.9L0.6 10.9Z" fill="url(#bg1)" stroke="#c04800" stroke-width="1.2" stroke-linejoin="round"/></svg>
<div class="t" style="left:65px;top:665px;font-size:12px;transform:scaleX(0.8450);">JEWELED</div>
<svg style="left:47px;top:684px" width="7" height="12" viewBox="0 0 7 12"><path d="M0.6 0.6H6.4V10.9L3.5 7.9L0.6 10.9Z" fill="url(#bg1)" stroke="#c04800" stroke-width="1.2" stroke-linejoin="round"/></svg>
<div class="t" style="left:65px;top:685px;font-size:12px;transform:scaleX(0.9133);">LANTERNS (23)</div>
</div>
<div style="left:379px;top:83px;width:429px;height:20px;background:#fff;border:1px solid #7a7a7a"></div>
<div class="t" style="left:385px;top:88px;font-size:12px;transform:scaleX(0.8994);">&lt;DB result&gt;</div>
<svg style="left:795px;top:92px" width="10" height="6" viewBox="0 0 10 6"><path d="M0.5 0.5L5 5L9.5 0.5" fill="none" stroke="#444" stroke-width="1.1"/></svg>
<svg style="left:837px;top:91px" width="8" height="5" viewBox="0 0 8 5"><path d="M0 0H8L4 4.5Z" fill="#222"/></svg>
<div style="left:851px;top:83px;width:130px;height:20px;background:#fff;border:1px solid #7a7a7a"></div>
<div class="t" style="left:879px;top:88px;font-size:12px;transform:scaleX(0.8710);color:#7d7d7d">Quick search</div>
<svg style="left:354px;top:85px" width="17" height="16" viewBox="0 0 17 16"><path d="M1.2 7.5L7.5 1L14 7.5H10.8Q10.8 11.8 13 12.2Q14.8 12.4 15.8 10.2Q15.6 15.5 10.5 15.5Q4.6 15.5 4.6 9.2V7.5Z" fill="url(#grn2)" stroke="#3a8000" stroke-width="0.8" stroke-linejoin="round"/></svg>
<svg style="left:355px;top:107px" width="15" height="17" viewBox="0 0 15 17"><path d="M1 8.5L8.6 1V5H14V12H8.6V16Z" fill="url(#bk)" stroke="#4848a8" stroke-width="1" stroke-linejoin="round"/></svg>
<svg style="left:383px;top:107px" width="15" height="17" viewBox="0 0 15 17"><path d="M14.2 8.5L7.5 0.8V4.8H1V12.2H7.5V16.2Z" fill="#d4d4d4" stroke="#a8a8a8" stroke-width="1" stroke-linejoin="round"/></svg>
<svg style="left:413px;top:107px" width="16" height="15" viewBox="0 0 16 15"><path d="M1.5 3.2Q1.5 2 2.7 2H6.2L7.5 3.5H12.5Q13.5 3.5 13.5 4.5V12.8Q13.5 13.8 12.5 13.8H2.5Q1.5 13.8 1.5 12.8Z" fill="#e8b040" stroke="#a06818" stroke-width="0.9"/><path d="M1.8 13.5V7.2Q1.8 6.3 2.8 6.3H5.5L6.5 5.6H12.6Q13.3 5.6 13.3 6.4V13.5Z" fill="url(#fold)"/><path d="M12.4 1.2L13 3.2L15 2.6L13.8 4.3L15.3 5.6L13.3 5.7L13.2 7.8L12.2 6L10.4 6.9L11.1 5L9.4 3.8L11.4 3.4Z" fill="#e01818" stroke="#a00" stroke-width="0.4"/></svg>
<svg style="left:439px;top:107px" width="18" height="16" viewBox="0 0 18 16"><rect x="1.2" y="4.2" width="13" height="7.4" rx="1" fill="#f4f4ff" stroke="#a0a0d8" stroke-width="1.1"/><path d="M2.8 5.8V10M2.1 5.8H3.5M2.1 10H3.5" stroke="#222" stroke-width="1"/><path d="M3.3 14.8L4.6 11.6L14.4 1.8L16.4 3.8L6.6 13.6Z" fill="#f4c838" stroke="#a87818" stroke-width="0.7"/><path d="M14.4 1.8L15.5 0.7Q16.2 0.2 16.9 0.9L17.3 1.3Q17.8 2 17.3 2.6L16.4 3.8Z" fill="#e87878"/><path d="M3.3 14.8L4.6 11.6L6.6 13.6Z" fill="#8a4a20"/></svg>
<svg style="left:468px;top:107px" width="15" height="15" viewBox="0 0 15 15"><defs><linearGradient id="redg" gradientUnits="userSpaceOnUse" x1="0" y1="1" x2="0" y2="14"><stop offset="0" stop-color="#ff9a9a"/><stop offset="1" stop-color="#d42020"/></linearGradient></defs><path d="M2.6 2.6L12.4 12.4M12.4 2.6L2.6 12.4" stroke="#8a2a2a" stroke-width="5.4"/><path d="M2.9 2.9L12.1 12.1M12.1 2.9L2.9 12.1" stroke="url(#redg)" stroke-width="3.8"/></svg>
<svg style="left:497px;top:106px" width="18" height="17" viewBox="0 0 18 17"><rect x="1.5" y="1.5" width="15" height="14" fill="#fff" stroke="#5050a8"/><rect x="1.5" y="1.5" width="15" height="1.5" fill="#8080c8"/><rect x="4" y="5.5" width="2" height="2" fill="#3030c0"/><rect x="4" y="9.5" width="2" height="2" fill="#3030c0"/><rect x="8" y="5.5" width="2" height="2" fill="#3030c0"/><rect x="8" y="9.5" width="2" height="2" fill="#3030c0"/><rect x="12" y="5.5" width="2" height="2" fill="#3030c0"/><rect x="12" y="9.5" width="2" height="2" fill="#3030c0"/></svg>
<svg style="left:544px;top:106px" width="17" height="17" viewBox="0 0 17 17"><path d="M5 0.8L9.5 5.5H6.8V12H3.2V5.5H0.5Z" fill="url(#grn)" stroke="#2c7a0c" stroke-width="0.8"/><path d="M11.5 16.2L16 11.5H13.3V5H9.7V11.5H7Z" fill="url(#grn)" stroke="#2c7a0c" stroke-width="0.8"/></svg>
<svg style="left:585px;top:106px" width="14" height="17" viewBox="0 0 14 17"><path d="M0.8 2Q0.8 0.8 7 0.8Q13.2 0.8 13.2 2L8.8 8.5V14.5Q8.8 16 7 16Q5.2 16 5.2 14.5V8.5Z" fill="url(#gold)" stroke="#c07000" stroke-width="0.9"/><ellipse cx="7" cy="2.2" rx="5" ry="1" fill="#ffcc40"/></svg>
<svg style="left:647px;top:103px" width="20" height="21" viewBox="0 0 20 21"><polygon points="10.00,1.80 12.88,7.24 18.94,8.30 14.66,12.71 15.53,18.80 10.00,16.10 4.47,18.80 5.34,12.71 1.06,8.30 7.12,7.24" fill="url(#star0)" stroke="#8a8a8a" stroke-width="1.3" stroke-linejoin="round"/></svg>
<svg style="left:668px;top:103px" width="20" height="21" viewBox="0 0 20 21"><polygon points="10.00,1.80 12.88,7.24 18.94,8.30 14.66,12.71 15.53,18.80 10.00,16.10 4.47,18.80 5.34,12.71 1.06,8.30 7.12,7.24" fill="url(#starg)" stroke="#999" stroke-width="1.1" stroke-linejoin="round"/><text x="10" y="15" font-family="Liberation Sans" font-weight="bold" font-size="8" text-anchor="middle" fill="#e8e8e8">1</text></svg>
<svg style="left:688px;top:103px" width="20" height="21" viewBox="0 0 20 21"><polygon points="10.00,1.80 12.88,7.24 18.94,8.30 14.66,12.71 15.53,18.80 10.00,16.10 4.47,18.80 5.34,12.71 1.06,8.30 7.12,7.24" fill="url(#starg2)" stroke="#999" stroke-width="1.1" stroke-linejoin="round"/><text x="10" y="15" font-family="Liberation Sans" font-weight="bold" font-size="8" text-anchor="middle" fill="#e8e8e8">2</text></svg>
<svg style="left:708px;top:103px" width="20" height="21" viewBox="0 0 20 21"><polygon points="10.00,1.80 12.88,7.24 18.94,8.30 14.66,12.71 15.53,18.80 10.00,16.10 4.47,18.80 5.34,12.71 1.06,8.30 7.12,7.24" fill="url(#starg)" stroke="#999" stroke-width="1.1" stroke-linejoin="round"/><text x="10" y="15" font-family="Liberation Sans" font-weight="bold" font-size="8" text-anchor="middle" fill="#e8e8e8">3</text></svg>
<svg style="left:728px;top:103px" width="20" height="21" viewBox="0 0 20 21"><polygon points="10.00,1.80 12.88,7.24 18.94,8.30 14.66,12.71 15.53,18.80 10.00,16.10 4.47,18.80 5.34,12.71 1.06,8.30 7.12,7.24" fill="url(#starg3)" stroke="#999" stroke-width="1.1" stroke-linejoin="round"/><text x="10" y="15" font-family="Liberation Sans" font-weight="bold" font-size="8" text-anchor="middle" fill="#e8e8e8">4</text></svg>
<svg style="left:748px;top:103px" width="20" height="21" viewBox="0 0 20 21"><polygon points="10.00,1.80 12.88,7.24 18.94,8.30 14.66,12.71 15.53,18.80 10.00,16.10 4.47,18.80 5.34,12.71 1.06,8.30 7.12,7.24" fill="url(#starg2)" stroke="#999" stroke-width="1.1" stroke-linejoin="round"/><text x="10" y="15" font-family="Liberation Sans" font-weight="bold" font-size="8" text-anchor="middle" fill="#e8e8e8">5</text></svg>
<svg style="left:815px;top:84px" width="17" height="17" viewBox="0 0 17 17"><polygon points="8.50,1.00 10.62,6.09 16.11,6.53 11.92,10.11 13.20,15.47 8.50,12.60 3.80,15.47 5.08,10.11 0.89,6.53 6.38,6.09" fill="url(#gold)" stroke="#c07800" stroke-width="1" stroke-linejoin="round"/></svg>
<svg style="left:857px;top:84px" width="16" height="17" viewBox="0 0 16 17"><path d="M6.5 10L1.5 15" stroke="#7a4a10" stroke-width="3.2" stroke-linecap="round"/><circle cx="9.5" cy="6.5" r="5.2" fill="#c8ecff" stroke="#2a7ad0" stroke-width="1.4"/><circle cx="8.5" cy="5" r="1.8" fill="#fff" opacity="0.8"/></svg>
<svg style="left:520px;top:113px" width="8" height="5" viewBox="0 0 8 5"><path d="M0 0H8L4 4.5Z" fill="#222"/></svg>
<svg style="left:567px;top:113px" width="8" height="5" viewBox="0 0 8 5"><path d="M0 0H8L4 4.5Z" fill="#222"/></svg>
<svg style="left:606px;top:113px" width="8" height="5" viewBox="0 0 8 5"><path d="M0 0H8L4 4.5Z" fill="#222"/></svg>
<svg style="left:627px;top:110px" width="9" height="10" viewBox="0 0 9 10"><path d="M0.8 0.8L8 3.6L0.8 6.4M0.8 9H8" fill="none" stroke="#222" stroke-width="1.4"/></svg>
<div style="left:754px;top:138px;width:200px;height:4px;background:#e7eaea;border:1px solid #d6d6d6"></div>
<div style="left:792px;top:130px;width:11px;height:22px;background:#0078d7"></div>
<div style="left:962px;top:134px;width:4px;height:4px;background:#26269a"></div>
<div style="left:967px;top:134px;width:4px;height:4px;background:#26269a"></div>
<div style="left:972px;top:134px;width:4px;height:4px;background:#26269a"></div>
<div style="left:962px;top:139px;width:4px;height:4px;background:#26269a"></div>
<div style="left:967px;top:139px;width:4px;height:4px;background:#26269a"></div>
<div style="left:972px;top:139px;width:4px;height:4px;background:#26269a"></div>
<div style="left:962px;top:144px;width:4px;height:4px;background:#26269a"></div>
<div style="left:967px;top:144px;width:4px;height:4px;background:#26269a"></div>
<div style="left:972px;top:144px;width:4px;height:4px;background:#26269a"></div>
<div style="left:352px;top:152px;width:629px;height:677px;background:#fff;border:1px solid #828790"></div>
<div style="left:963px;top:153px;width:17px;height:675px;background:#f0f0f0"></div>
<svg style="left:967px;top:160px" width="8" height="6" viewBox="0 0 8 6"><path d="M0.8 5.2L4 1.8L7.2 5.2" fill="none" stroke="#bdbdbd" stroke-width="1.7"/></svg>
<svg style="left:967px;top:816px" width="8" height="6" viewBox="0 0 8 6"><path d="M0.8 0.8L4 4.2L7.2 0.8" fill="none" stroke="#bdbdbd" stroke-width="1.7"/></svg>
<svg style="left:0;top:0" width="0" height="0"><defs>
<linearGradient id="sky" x1="0.2" y1="0" x2="1" y2="0.85"><stop offset="0" stop-color="#1eaaea"/><stop offset="0.5" stop-color="#34a2e8"/><stop offset="1" stop-color="#9a86de"/></linearGradient>
<linearGradient id="docg" x1="0" y1="0" x2="1" y2="1"><stop offset="0" stop-color="#fafbfb"/><stop offset="1" stop-color="#f1f2f3"/></linearGradient>
<linearGradient id="foldg" x1="0" y1="0" x2="1" y2="1"><stop offset="0" stop-color="#f5f5f5"/><stop offset="1" stop-color="#d6d6d6"/></linearGradient>
<linearGradient id="cbg" x1="0" y1="0" x2="0" y2="1"><stop offset="0" stop-color="#fbfbfb"/><stop offset="1" stop-color="#d9d9d9"/></linearGradient>
</defs></svg>
<div style="left:354px;top:154px;width:152px;height:121px;background:#e9e9e9;border:1px solid #ababab"></div>
<div style="left:355px;top:155px;width:150px;height:119px;border:1px solid #ededed;border-top-color:#eaeaea;border-left-color:#eaeaea"></div>
<div style="left:505px;top:154px;width:152px;height:121px;background:#e9e9e9;border:1px solid #ababab"></div>
<div style="left:506px;top:155px;width:150px;height:119px;border:1px solid #ededed;border-top-color:#eaeaea;border-left-color:#eaeaea"></div>
<div style="left:656px;top:154px;width:152px;height:121px;background:#e9e9e9;border:1px solid #ababab"></div>
<div style="left:657px;top:155px;width:150px;height:119px;border:1px solid #ededed;border-top-color:#eaeaea;border-left-color:#eaeaea"></div>
<div style="left:807px;top:154px;width:152px;height:121px;background:#e9e9e9;border:1px solid #ababab"></div>
<div style="left:808px;top:155px;width:150px;height:119px;border:1px solid #ededed;border-top-color:#eaeaea;border-left-color:#eaeaea"></div>
<div style="left:354px;top:274px;width:152px;height:121px;background:#e9e9e9;border:1px solid #ababab"></div>
<div style="left:355px;top:275px;width:150px;height:119px;border:1px solid #ededed;border-top-color:#eaeaea;border-left-color:#eaeaea"></div>
<div style="left:505px;top:274px;width:152px;height:121px;background:#e9e9e9;border:1px solid #ababab"></div>
<div style="left:506px;top:275px;width:150px;height:119px;border:1px solid #ededed;border-top-color:#eaeaea;border-left-color:#eaeaea"></div>
<svg style="left:366px;top:166px" width="11" height="11" viewBox="0 0 11 11"><rect x="0.6" y="0.6" width="9.8" height="9.8" rx="2" fill="url(#cbg)" stroke="#8f8f8f" stroke-width="1.2"/></svg>
<svg style="left:382px;top:166px" width="7" height="12" viewBox="0 0 7 12"><path d="M0.6 0.6H6.4V10.9L3.5 7.9L0.6 10.9Z" fill="url(#bg1)" stroke="#c04800" stroke-width="1.2" stroke-linejoin="round"/></svg>
<svg style="left:400px;top:174px" width="61" height="81" viewBox="0 0 61 81">
<path d="M0 0H43L61 18V81H0Z" fill="url(#docg)"/>
<rect x="0" y="0" width="1" height="81" fill="#8e8e8e"/>
<path d="M43 0L61 18H43Z" fill="url(#foldg)"/>
<rect x="43" y="0" width="1" height="18" fill="#9a9a9a"/><rect x="43" y="17.5" width="18" height="1" fill="#a6a6a6"/>
<path d="M44 0.5L60.5 17" stroke="#a0a0a0" stroke-width="0.8" stroke-dasharray="1 2"/>
<rect x="11" y="22" width="39" height="39" fill="url(#sky)"/>
<ellipse cx="37" cy="31.5" rx="3.9" ry="3.5" fill="#f4f6fb"/>
<path d="M28 49L37 40.2L50 52V61H36Z" fill="#4468cf"/>
<path d="M11 45.8L22.5 36L50 61H11Z" fill="#163b7b"/>
</svg>
<svg style="left:517px;top:166px" width="11" height="11" viewBox="0 0 11 11"><rect x="0.6" y="0.6" width="9.8" height="9.8" rx="2" fill="url(#cbg)" stroke="#8f8f8f" stroke-width="1.2"/></svg>
<svg style="left:533px;top:166px" width="7" height="12" viewBox="0 0 7 12"><path d="M0.6 0.6H6.4V10.9L3.5 7.9L0.6 10.9Z" fill="url(#bg1)" stroke="#c04800" stroke-width="1.2" stroke-linejoin="round"/></svg>
<svg style="left:551px;top:174px" width="61" height="81" viewBox="0 0 61 81">
<path d="M0 0H43L61 18V81H0Z" fill="url(#docg)"/>
<rect x="0" y="0" width="1" height="81" fill="#8e8e8e"/>
<path d="M43 0L61 18H43Z" fill="url(#foldg)"/>
<rect x="43" y="0" width="1" height="18" fill="#9a9a9a"/><rect x="43" y="17.5" width="18" height="1" fill="#a6a6a6"/>
<path d="M44 0.5L60.5 17" stroke="#a0a0a0" stroke-width="0.8" stroke-dasharray="1 2"/>
<rect x="11" y="22" width="39" height="39" fill="url(#sky)"/>
<ellipse cx="37" cy="31.5" rx="3.9" ry="3.5" fill="#f4f6fb"/>
<path d="M28 49L37 40.2L50 52V61H36Z" fill="#4468cf"/>
<path d="M11 45.8L22.5 36L50 61H11Z" fill="#163b7b"/>
</svg>
<svg style="left:668px;top:166px" width="11" height="11" viewBox="0 0 11 11"><rect x="0.6" y="0.6" width="9.8" height="9.8" rx="2" fill="url(#cbg)" stroke="#8f8f8f" stroke-width="1.2"/></svg>
<svg style="left:684px;top:166px" width="7" height="12" viewBox="0 0 7 12"><path d="M0.6 0.6H6.4V10.9L3.5 7.9L0.6 10.9Z" fill="url(#bg1)" stroke="#c04800" stroke-width="1.2" stroke-linejoin="round"/></svg>
<svg style="left:702px;top:174px" width="61" height="81" viewBox="0 0 61 81">
<path d="M0 0H43L61 18V81H0Z" fill="url(#docg)"/>
<rect x="0" y="0" width="1" height="81" fill="#8e8e8e"/>
<path d="M43 0L61 18H43Z" fill="url(#foldg)"/>
<rect x="43" y="0" width="1" height="18" fill="#9a9a9a"/><rect x="43" y="17.5" width="18" height="1" fill="#a6a6a6"/>
<path d="M44 0.5L60.5 17" stroke="#a0a0a0" stroke-width="0.8" stroke-dasharray="1 2"/>
<rect x="11" y="22" width="39" height="39" fill="url(#sky)"/>
<ellipse cx="37" cy="31.5" rx="3.9" ry="3.5" fill="#f4f6fb"/>
<path d="M28 49L37 40.2L50 52V61H36Z" fill="#4468cf"/>
<path d="M11 45.8L22.5 36L50 61H11Z" fill="#163b7b"/>
</svg>
<svg style="left:819px;top:166px" width="11" height="11" viewBox="0 0 11 11"><rect x="0.6" y="0.6" width="9.8" height="9.8" rx="2" fill="url(#cbg)" stroke="#8f8f8f" stroke-width="1.2"/></svg>
<svg style="left:835px;top:166px" width="7" height="12" viewBox="0 0 7 12"><path d="M0.6 0.6H6.4V10.9L3.5 7.9L0.6 10.9Z" fill="url(#bg1)" stroke="#c04800" stroke-width="1.2" stroke-linejoin="round"/></svg>
<svg style="left:853px;top:174px" width="61" height="81" viewBox="0 0 61 81">
<path d="M0 0H43L61 18V81H0Z" fill="url(#docg)"/>
<rect x="0" y="0" width="1" height="81" fill="#8e8e8e"/>
<path d="M43 0L61 18H43Z" fill="url(#foldg)"/>
<rect x="43" y="0" width="1" height="18" fill="#9a9a9a"/><rect x="43" y="17.5" width="18" height="1" fill="#a6a6a6"/>
<path d="M44 0.5L60.5 17" stroke="#a0a0a0" stroke-width="0.8" stroke-dasharray="1 2"/>
<rect x="11" y="22" width="39" height="39" fill="url(#sky)"/>
<ellipse cx="37" cy="31.5" rx="3.9" ry="3.5" fill="#f4f6fb"/>
<path d="M28 49L37 40.2L50 52V61H36Z" fill="#4468cf"/>
<path d="M11 45.8L22.5 36L50 61H11Z" fill="#163b7b"/>
</svg>
<svg style="left:366px;top:286px" width="11" height="11" viewBox="0 0 11 11"><rect x="0.6" y="0.6" width="9.8" height="9.8" rx="2" fill="url(#cbg)" stroke="#8f8f8f" stroke-width="1.2"/></svg>
<svg style="left:382px;top:286px" width="7" height="12" viewBox="0 0 7 12"><path d="M0.6 0.6H6.4V10.9L3.5 7.9L0.6 10.9Z" fill="url(#bg1)" stroke="#c04800" stroke-width="1.2" stroke-linejoin="round"/></svg>
<svg style="left:400px;top:294px" width="61" height="81" viewBox="0 0 61 81">
<path d="M0 0H43L61 18V81H0Z" fill="url(#docg)"/>
<rect x="0" y="0" width="1" height="81" fill="#8e8e8e"/>
<path d="M43 0L61 18H43Z" fill="url(#foldg)"/>
<rect x="43" y="0" width="1" height="18" fill="#9a9a9a"/><rect x="43" y="17.5" width="18" height="1" fill="#a6a6a6"/>
<path d="M44 0.5L60.5 17" stroke="#a0a0a0" stroke-width="0.8" stroke-dasharray="1 2"/>
<rect x="11" y="22" width="39" height="39" fill="url(#sky)"/>
<ellipse cx="37" cy="31.5" rx="3.9" ry="3.5" fill="#f4f6fb"/>
<path d="M28 49L37 40.2L50 52V61H36Z" fill="#4468cf"/>
<path d="M11 45.8L22.5 36L50 61H11Z" fill="#163b7b"/>
</svg>
<svg style="left:517px;top:286px" width="11" height="11" viewBox="0 0 11 11"><rect x="0.6" y="0.6" width="9.8" height="9.8" rx="2" fill="url(#cbg)" stroke="#8f8f8f" stroke-width="1.2"/></svg>
<svg style="left:533px;top:286px" width="7" height="12" viewBox="0 0 7 12"><path d="M0.6 0.6H6.4V10.9L3.5 7.9L0.6 10.9Z" fill="url(#bg1)" stroke="#c04800" stroke-width="1.2" stroke-linejoin="round"/></svg>
<svg style="left:551px;top:294px" width="61" height="81" viewBox="0 0 61 81">
<path d="M0 0H43L61 18V81H0Z" fill="url(#docg)"/>
<rect x="0" y="0" width="1" height="81" fill="#8e8e8e"/>
<path d="M43 0L61 18H43Z" fill="url(#foldg)"/>
<rect x="43" y="0" width="1" height="18" fill="#9a9a9a"/><rect x="43" y="17.5" width="18" height="1" fill="#a6a6a6"/>
<path d="M44 0.5L60.5 17" stroke="#a0a0a0" stroke-width="0.8" stroke-dasharray="1 2"/>
<rect x="11" y="22" width="39" height="39" fill="url(#sky)"/>
<ellipse cx="37" cy="31.5" rx="3.9" ry="3.5" fill="#f4f6fb"/>
<path d="M28 49L37 40.2L50 52V61H36Z" fill="#4468cf"/>
<path d="M11 45.8L22.5 36L50 61H11Z" fill="#163b7b"/>
</svg>
<div style="left:985px;top:83px;width:230px;height:19px;background:#dadada;border:1px solid #bcbcbc;border-right:none"></div>
<div class="t" style="left:990px;top:88px;font-size:12px;transform:scaleX(0.9605);">Preview</div>
<div style="left:985px;top:466px;width:230px;height:19px;background:#dadada;border:1px solid #bcbcbc;border-right:none"></div>
<div class="t" style="left:991px;top:471px;font-size:12px;transform:scaleX(0.9478);">Categories</div>
<div style="left:985px;top:487px;width:230px;height:21px;background:#fff;border:1px solid #7a7a7a;border-right:none"></div>
<div style="left:985px;top:513px;width:230px;height:316px;background:#fff;border:1px solid #828790;border-right:none"></div>
<div style="left:986px;top:514px;width:229px;height:314px;overflow:hidden">
<div style="left:60px;top:0px;width:300px;height:17px;background:#cce8ff"></div>
<div style="left:80px;top:0px;width:300px;height:17px;border:1px dotted #444;border-right:none"></div>
<div style="left:63px;top:2px;width:13px;height:13px;background:#fff;border:1.5px solid #333"></div>
<div class="t" style="left:82px;top:3px;font-size:12px;transform:scaleX(0.9373);">SNOWY</div>
<div style="left:40px;top:17px;width:300px;height:17px;background:#f3f3f3"></div>
<div style="left:43px;top:19px;width:13px;height:13px;background:#fff;border:1.5px solid #333"></div>
<div class="t" style="left:62px;top:20px;font-size:12px;transform:scaleX(0.8916);">STOCKING</div>
<svg style="left:5px;top:39px" width="10" height="6" viewBox="0 0 10 6"><path d="M0.9 0.9L5 4.8L9.1 0.9" fill="none" stroke="#3a3a3a" stroke-width="1.7"/></svg>
<div style="left:23px;top:36px;width:13px;height:13px;background:#fff;border:1.5px solid #333"></div>
<div class="t" style="left:42px;top:37px;font-size:12px;transform:scaleX(0.9287);">2013</div>
<div style="left:40px;top:51px;width:300px;height:17px;background:#f3f3f3"></div>
<div style="left:43px;top:53px;width:13px;height:13px;background:#fff;border:1.5px solid #333"></div>
<div class="t" style="left:62px;top:54px;font-size:12px;transform:scaleX(0.8886);">CRYSTAL OR ICY</div>
<div style="left:23px;top:70px;width:13px;height:13px;background:#fff;border:1.5px solid #333"></div>
<div class="t" style="left:42px;top:71px;font-size:12px;transform:scaleX(0.9549);">2014</div>
<div style="left:20px;top:85px;width:300px;height:17px;background:#f3f3f3"></div>
<div style="left:23px;top:87px;width:13px;height:13px;background:#fff;border:1.5px solid #333"></div>
<div class="t" style="left:42px;top:88px;font-size:12px;transform:scaleX(0.9287);">2022</div>
<div style="left:23px;top:104px;width:13px;height:13px;background:#fff;border:1.5px solid #333"></div>
<div class="t" style="left:42px;top:105px;font-size:12px;transform:scaleX(0.9287);">2023</div>
<div style="left:20px;top:119px;width:300px;height:17px;background:#f3f3f3"></div>
<div style="left:23px;top:121px;width:13px;height:13px;background:#fff;border:1.5px solid #333"></div>
<div class="t" style="left:42px;top:122px;font-size:12px;transform:scaleX(0.9168);">3RD FLOOR/VINTAGE</div>
<div style="left:23px;top:138px;width:13px;height:13px;background:#fff;border:1.5px solid #333"></div>
<div class="t" style="left:42px;top:139px;font-size:12px;transform:scaleX(0.8569);">ACCESSORIES</div>
<div style="left:20px;top:153px;width:300px;height:17px;background:#f3f3f3"></div>
<div style="left:23px;top:155px;width:13px;height:13px;background:#fff;border:1.5px solid #333"></div>
<div class="t" style="left:42px;top:156px;font-size:12px;transform:scaleX(0.9728);">ALCOHOL</div>
<svg style="left:5px;top:175px" width="10" height="6" viewBox="0 0 10 6"><path d="M0.9 0.9L5 4.8L9.1 0.9" fill="none" stroke="#3a3a3a" stroke-width="1.7"/></svg>
<div style="left:23px;top:172px;width:13px;height:13px;background:#fff;border:1.5px solid #333"></div>
<div class="t" style="left:42px;top:173px;font-size:12px;transform:scaleX(0.9099);">ANGELS</div>
<div style="left:40px;top:187px;width:300px;height:17px;background:#f3f3f3"></div>
<div style="left:43px;top:189px;width:13px;height:13px;background:#fff;border:1.5px solid #333"></div>
<div class="t" style="left:62px;top:190px;font-size:12px;transform:scaleX(0.9212);">2015</div>
<div style="left:43px;top:206px;width:13px;height:13px;background:#fff;border:1.5px solid #333"></div>
<div class="t" style="left:62px;top:207px;font-size:12px;transform:scaleX(0.9365);">ORNAMENTS</div>
<div style="left:40px;top:221px;width:300px;height:17px;background:#f3f3f3"></div>
<div style="left:43px;top:223px;width:13px;height:13px;background:#fff;border:1.5px solid #333"></div>
<div class="t" style="left:62px;top:224px;font-size:12px;transform:scaleX(0.9189);">SIT ABOUT</div>
<svg style="left:5px;top:243px" width="10" height="6" viewBox="0 0 10 6"><path d="M0.9 0.9L5 4.8L9.1 0.9" fill="none" stroke="#3a3a3a" stroke-width="1.7"/></svg>
<div style="left:23px;top:240px;width:13px;height:13px;background:#fff;border:1.5px solid #333"></div>
<div class="t" style="left:42px;top:241px;font-size:12px;">ANIMALS</div>
<div style="left:40px;top:255px;width:300px;height:17px;background:#f3f3f3"></div>
<div style="left:43px;top:257px;width:13px;height:13px;background:#fff;border:1.5px solid #333"></div>
<div class="t" style="left:62px;top:258px;font-size:12px;transform:scaleX(0.8651);">BEARS</div>
<div style="left:43px;top:274px;width:13px;height:13px;background:#fff;border:1.5px solid #333"></div>
<div class="t" style="left:62px;top:275px;font-size:12px;transform:scaleX(0.8777);">BIRDS</div>
<div style="left:40px;top:289px;width:300px;height:17px;background:#f3f3f3"></div>
<div style="left:43px;top:291px;width:13px;height:13px;background:#fff;border:1.5px solid #333"></div>
<div class="t" style="left:62px;top:292px;font-size:12px;transform:scaleX(0.9186);">BUNNIES</div>
<div style="left:43px;top:308px;width:13px;height:13px;background:#fff;border:1.5px solid #333"></div>
<div class="t" style="left:62px;top:309px;font-size:12px;transform:scaleX(0.8550);">BUTTERFLY</div>
</div>
<div style="left:0px;top:834px;width:1215px;height:19px;background:#dadada;border-top:1px solid #bcbcbc;border-bottom:1px solid #bcbcbc;border-left:1px solid #bcbcbc"></div>
<div class="t" style="left:5.5px;top:839px;font-size:12px;transform:scaleX(0.9402);">Category Sets</div>
<div style="left:1px;top:856px;width:66px;height:18px;background:#e1e1e1;border:1px solid #adadad"></div>
<div class="t" style="left:5px;top:859px;font-size:12px;transform:scaleX(0.9347);">Manager...</div>
</body></html>
